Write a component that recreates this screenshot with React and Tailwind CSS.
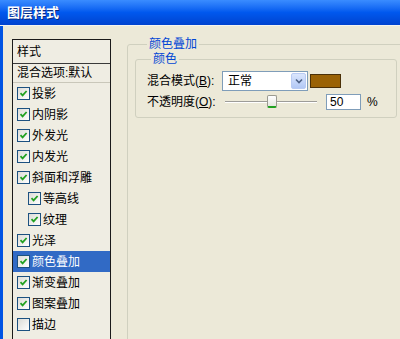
import React from "react";

const styleItems = [
  { label: "投影", checked: true, level: 1 },
  { label: "内阴影", checked: true, level: 1 },
  { label: "外发光", checked: true, level: 1 },
  { label: "内发光", checked: true, level: 1 },
  { label: "斜面和浮雕", checked: true, level: 1 },
  { label: "等高线", checked: true, level: 2 },
  { label: "纹理", checked: true, level: 2 },
  { label: "光泽", checked: true, level: 1 },
  { label: "颜色叠加", checked: true, level: 1, selected: true },
  { label: "渐变叠加", checked: true, level: 1 },
  { label: "图案叠加", checked: true, level: 1 },
  { label: "描边", checked: false, level: 1 },
];

// XP 스타일 체크박스
const CheckBox = ({ checked }) => (
  <div className="w-[13px] h-[13px] shrink-0 border border-[#1c5180] bg-gradient-to-br from-[#dcdcd7] to-white flex items-center justify-center">
    {checked && (
      <svg width="9" height="9" viewBox="0 0 9 9">
        <path
          d="M1.5 4.2 L3.6 6.4 L7.6 2"
          stroke="#21a121"
          strokeWidth="1.8"
          fill="none"
        />
      </svg>
    )}
  </div>
);

const App = () => {
  return (
    <div className="w-[400px] h-[339px] overflow-hidden bg-[#ece9d8] font-['Liberation_Sans','Noto_Sans_CJK_SC',sans-serif] text-[12px] text-black flex flex-col">
      {/* 타이틀 바 */}
      <div className="h-[26px] shrink-0 bg-gradient-to-b from-[#3a8cff] via-[#0058ee] to-[#0043cf] border-b border-[#f4f4f0] flex items-center pl-[7px]">
        <span className="text-white font-bold text-[13px] leading-none [text-shadow:1px_1px_0_#0a2a80]">
          图层样式
        </span>
      </div>

      <div className="flex-1 flex border-l-[3px] border-[#0054e3]">
        {/* 왼쪽 스타일 목록 */}
        <div className="pl-[9px] pt-[13px]">
          <div className="w-[99px] h-[320px] border border-[#1a1a1a] bg-[#efede3]">
            <div className="h-[24px] border-b border-[#3a3a3a] flex items-center pl-[4px]">
              样式
            </div>
            <div className="h-[19px] border-b border-[#c9c7ba] flex items-center pl-[4px]">
              混合选项:默认
            </div>
            {styleItems.map((item) => (
              <div
                key={item.label}
                className={`h-[21px] flex items-center gap-[2px] ${
                  item.level === 2 ? "pl-[15px]" : "pl-[4px]"
                } ${item.selected ? "bg-[#316ac5] text-white" : ""}`}
              >
                <CheckBox checked={item.checked} />
                <span>{item.label}</span>
              </div>
            ))}
          </div>
        </div>

        {/* 오른쪽 설정 영역 */}
        <div className="pl-[16px] pt-[11px]">
          <fieldset className="w-[300px] h-[400px] border border-[#d0d0bf] rounded-[3px] px-[7px]">
            <legend className="ml-[12px] px-[2px] text-[#0046d5] leading-[14px]">
              颜色叠加
            </legend>
            <fieldset className="mt-[1px] w-[262px] border border-[#d0d0bf] rounded-[3px] pt-[5px] pb-[7px]">
              <legend className="ml-[15px] px-[2px] text-[#0046d5] leading-[14px]">
                颜色
              </legend>

              {/* 혼합 모드 */}
              <div className="h-[20px] flex items-center pl-[11px]">
                <span className="w-[75px] shrink-0">
                  混合模式(<span className="underline">B</span>):
                </span>
                <div className="w-[86px] h-[20px] border border-[#7f9db9] bg-white flex items-center">
                  <span className="flex-1 pl-[5px]">正常</span>
                  <div className="w-[15px] h-[16px] mr-[1px] rounded-[2px] bg-gradient-to-b from-[#dbe6fd] to-[#b2c8f5] border border-[#b9cbf3] flex items-center justify-center">
                    <svg width="8" height="6" viewBox="0 0 8 6">
                      <path
                        d="M1 1.5 L4 4.5 L7 1.5"
                        stroke="#4d6185"
                        strokeWidth="1.6"
                        fill="none"
                      />
                    </svg>
                  </div>
                </div>
                <div className="ml-[2px] w-[31px] h-[14px] bg-[#9a6205] border border-[#4a3008]"></div>
              </div>

              {/* 불투명도 */}
              <div className="mt-[3px] h-[16px] flex items-center pl-[11px]">
                <span className="w-[75px] shrink-0">
                  不透明度(<span className="underline">O</span>):
                </span>
                <div className="relative w-[98px] h-[16px] flex items-center px-[3px]">
                  <div className="w-full h-[2px] border-t border-[#9d9c99] border-b border-b-white"></div>
                  <div className="absolute left-[45px] top-[1px] w-[10px] h-[13px] rounded-[2px] bg-gradient-to-b from-white to-[#e6e6e0] border border-[#9a9a90] border-b-[2px] border-b-[#21a121]"></div>
                </div>
                <div className="ml-[6px] w-[35px] h-[16px] border border-[#7f9db9] bg-white flex items-center pl-[3px] leading-none">
                  50
                </div>
                <span className="ml-[6px]">%</span>
              </div>
            </fieldset>
          </fieldset>
        </div>
      </div>
    </div>
  );
};

export default App;
